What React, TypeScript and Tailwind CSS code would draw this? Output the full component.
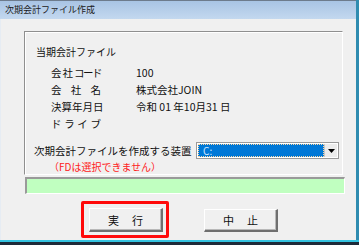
import React from "react";

const font = { fontFamily: '"Noto Sans CJK JP", "Noto Sans", sans-serif' };

function Row({ label, value }: { label: React.ReactNode; value?: string }) {
  return (
    <div className="flex h-[17px] items-center">
      <div className="ml-[26px] w-[50px] flex justify-between whitespace-nowrap">{label}</div>
      <div className="ml-[35px] whitespace-nowrap">{value}</div>
    </div>
  );
}

const btn =
  "flex items-center justify-center gap-[13px] bg-[#f0f0f0] border-t border-l border-white border-r-2 border-b-2 border-r-[#6f6f6f] border-b-[#6f6f6f] shadow-[inset_-1px_-1px_0_#b8b8b8] text-[11px]";

export default function App() {
  return (
    <div
      className="w-[359px] h-[245px] flex flex-col bg-[#f0f0f0] text-[10.5px] leading-[14px] text-[#111] overflow-hidden"
      style={font}
    >
      {/* title bar */}
      <div className="flex h-[19px] shrink-0">
        <div className="flex-1 flex items-center pl-[5px] border-t border-[#6d7b8c] bg-gradient-to-b from-[#a8c4e4] to-[#c3d8ef] text-[9px] text-[#1a1a1a]">
          次期会計ファイル作成
        </div>
        <div className="w-[3px] bg-[#2f8cb0]" />
      </div>

      {/* body */}
      <div className="flex flex-1">
        <div className="flex-1 flex flex-col pt-[12px] pl-[23px] pr-[11px] border-l border-[#e6ecf3]">
          {/* group box */}
          <div className="h-[144px] mr-[2px] border-l border-t border-[#8f8f8f] border-r border-b border-r-white border-b-white shadow-[inset_1px_1px_0_#ffffff] flex flex-col pt-[13px]">
            <div className="pl-[11px] h-[14px] text-[10px]">当期会計ファイル</div>
            <div className="mt-[5px] flex flex-col">
              <Row
                label={
                  <>
                    <span>会</span>
                    <span>社</span>
                    <span className="tracking-[-1.5px]">コード</span>
                  </>
                }
                value="100"
              />
              <Row
                label={
                  <>
                    <span>会</span>
                    <span>社</span>
                    <span>名</span>
                  </>
                }
                value="株式会社JOIN"
              />
              <Row
                label={
                  <>
                    <span>決算年月日</span>
                  </>
                }
                value="令和 01 年10月31 日"
              />
              <Row
                label={
                  <>
                    <span>ド</span>
                    <span>ラ</span>
                    <span>イ</span>
                    <span>ブ</span>
                  </>
                }
              />
            </div>
            <div className="mt-[10px] flex items-center h-[17px] pl-[9px]">
              <span className="w-[162px] whitespace-nowrap">次期会計ファイルを作成する装置</span>
              <div className="w-[143px] h-[17px] flex border border-[#9a9a9a] bg-white p-[1px]">
                <div className="flex-1 bg-[#0078d7] border border-dotted border-[#ffd7a0] flex items-center pl-[4px] text-[10px] text-[#cfe6ff]">
                  C:
                </div>
                <div className="w-[13px] flex items-center justify-center bg-[#ececec] border-l border-[#c8c8c8]">
                  <svg width="7" height="4" viewBox="0 0 7 4">
                    <path d="M0 0 H7 L3.5 4 Z" fill="#000" />
                  </svg>
                </div>
              </div>
            </div>
            <div className="pl-[24px] mt-[1px] text-[#ff2020] h-[14px] text-[10px] whitespace-nowrap">（FDは選択できません）</div>
          </div>

          {/* green bar */}
          <div className="mt-[2px] ml-[1px] h-[17px] bg-[#c0ffc0] border-t-2 border-l-2 border-[#9a9a9a] border-r border-b border-r-white border-b-white" />

          {/* buttons */}
          <div className="mt-[7px] flex items-start">
            <div className="ml-[57px] w-[88px] h-[37px] border-[3px] border-[#ff0a0a] rounded-[2px] pt-[4px] pl-[5px]">
              <div className={`w-[74px] h-[24px] ${btn}`}>
                <span>実</span>
                <span>行</span>
              </div>
            </div>
            <div className={`ml-[35px] mt-[8px] w-[74px] h-[23px] ${btn}`}>
              <span>中</span>
              <span>止</span>
            </div>
          </div>
        </div>
        <div className="w-[3px] bg-[#2f8cb0]" />
      </div>

      {/* bottom border */}
      <div className="h-[2px] shrink-0 bg-[#33c3e0]" />
      <div className="h-[3px] shrink-0 bg-[#1e2a38]" />
    </div>
  );
}
